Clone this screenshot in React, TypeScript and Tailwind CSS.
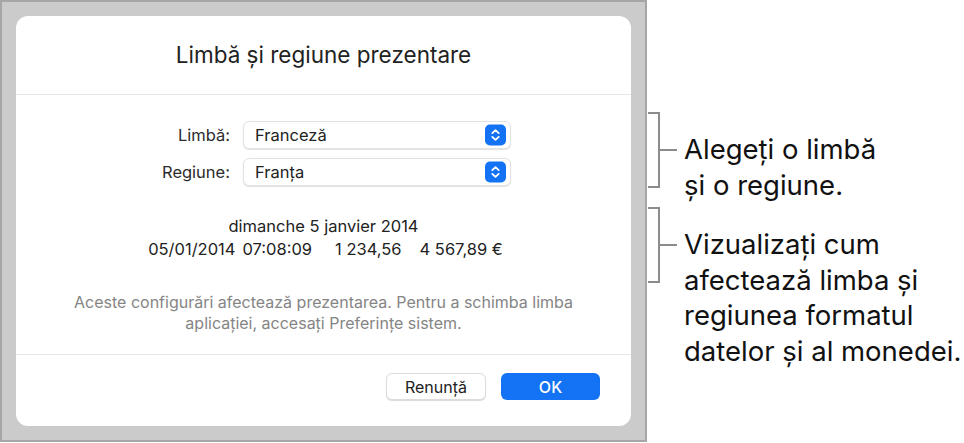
import React from "react";

const font = { fontFamily: "Inter, 'Noto Sans', sans-serif" };

const Stepper = () => (
    <div className="absolute right-[4px] top-1/2 -translate-y-1/2 w-[21px] h-[21px] rounded-[5px] bg-[#1473f4] flex items-center justify-center">
        <svg width="21" height="21" viewBox="0 0 21 21" fill="none" stroke="white" strokeWidth="1.8" strokeLinecap="round" strokeLinejoin="round">
            <path d="M7.3 8.6 L10.5 5.6 L13.7 8.6" />
            <path d="M7.3 12.4 L10.5 15.4 L13.7 12.4" />
        </svg>
    </div>
);

const SelectRow = ({ label, value }: { label: string; value: string }) => (
    <div className="flex items-center">
        <div className="w-[227px] pr-[13px] text-right text-[16.5px] text-[#2b2b2b]">{label}</div>
        <div className="relative w-[268px] h-[28px] rounded-[6px] border border-[#e2e2e2] bg-white shadow-[0_1px_1px_rgba(0,0,0,0.12)] flex items-center pl-[11px] text-[16.5px] text-[#222]">
            {value}
            <Stepper />
        </div>
    </div>
);

const Callout = ({ lines }: { lines: string[] }) => (
    <div className="flex items-start">
        <div className="flex items-center h-[76px]">
            <div className="w-[12px] h-full border-y-2 border-r-2 border-[#8c8c8c]" />
            <div className="w-[17px] h-[2px] bg-[#8c8c8c]" />
        </div>
        <div className="ml-[7px] mt-[20px] text-[27.5px] leading-[35.5px] text-[#111] whitespace-nowrap">
            {lines.map((l) => (
                <div key={l}>{l}</div>
            ))}
        </div>
    </div>
);

const App = () => {
    return (
        <div className="flex w-[964px] h-[443px] bg-white" style={font}>
            <div className="w-[647px] h-[442px] bg-[#cbcbcb] border-2 border-[#a6a6a6] p-[14px]">
                <div className="w-[615px] h-[410px] bg-white rounded-[12px] flex flex-col">
                    <div className="h-[79px] flex items-center justify-center border-b border-[#e6e6e6] text-[22.5px] text-[#222]">
                        Limbă și regiune prezentare
                    </div>
                    <div className="flex flex-col pt-[26px] gap-[9px]">
                        <SelectRow label="Limbă:" value="Franceză" />
                        <SelectRow label="Regiune:" value="Franța" />
                    </div>
                    <div className="mt-[29px] flex flex-col items-center text-[16.5px] leading-[23px] text-[#222]">
                        <div>dimanche 5 janvier 2014</div>
                        <div className="flex pl-[4px]">
                            <span>05/01/2014</span>
                            <span className="ml-[7px]">07:08:09</span>
                            <span className="ml-[23px]">1 234,56</span>
                            <span className="ml-[18px]">4 567,89 €</span>
                        </div>
                    </div>
                    <div className="mt-[31px] h-[62px] text-center text-[16px] leading-[21px] text-[#858585] whitespace-nowrap">
                        Aceste configurări afectează prezentarea. Pentru a schimba limba
                        <br />
                        aplicației, accesați Preferințe sistem.
                    </div>
                    <div className="border-t border-[#e6e6e6] flex justify-end gap-[15px] pt-[18px] pr-[31px]">
                        <button className="w-[100px] h-[27px] rounded-[6px] border border-[#dcdcdc] bg-white shadow-[0_1px_1px_rgba(0,0,0,0.15)] text-[16px] text-[#222]">
                            Renunță
                        </button>
                        <button className="w-[99px] h-[27px] rounded-[6px] bg-[#1473f4] text-[16px] text-white font-medium">
                            OK
                        </button>
                    </div>
                </div>
            </div>
            <div className="flex flex-col pt-[112px] pl-[1px]">
                <Callout lines={["Alegeți o limbă", "și o regiune."]} />
                <div className="mt-[4px]">
                    <Callout lines={["Vizualizați cum", "afectează limba și", "regiunea formatul", "datelor și al monedei."]} />
                </div>
            </div>
        </div>
    );
};

export default App;
